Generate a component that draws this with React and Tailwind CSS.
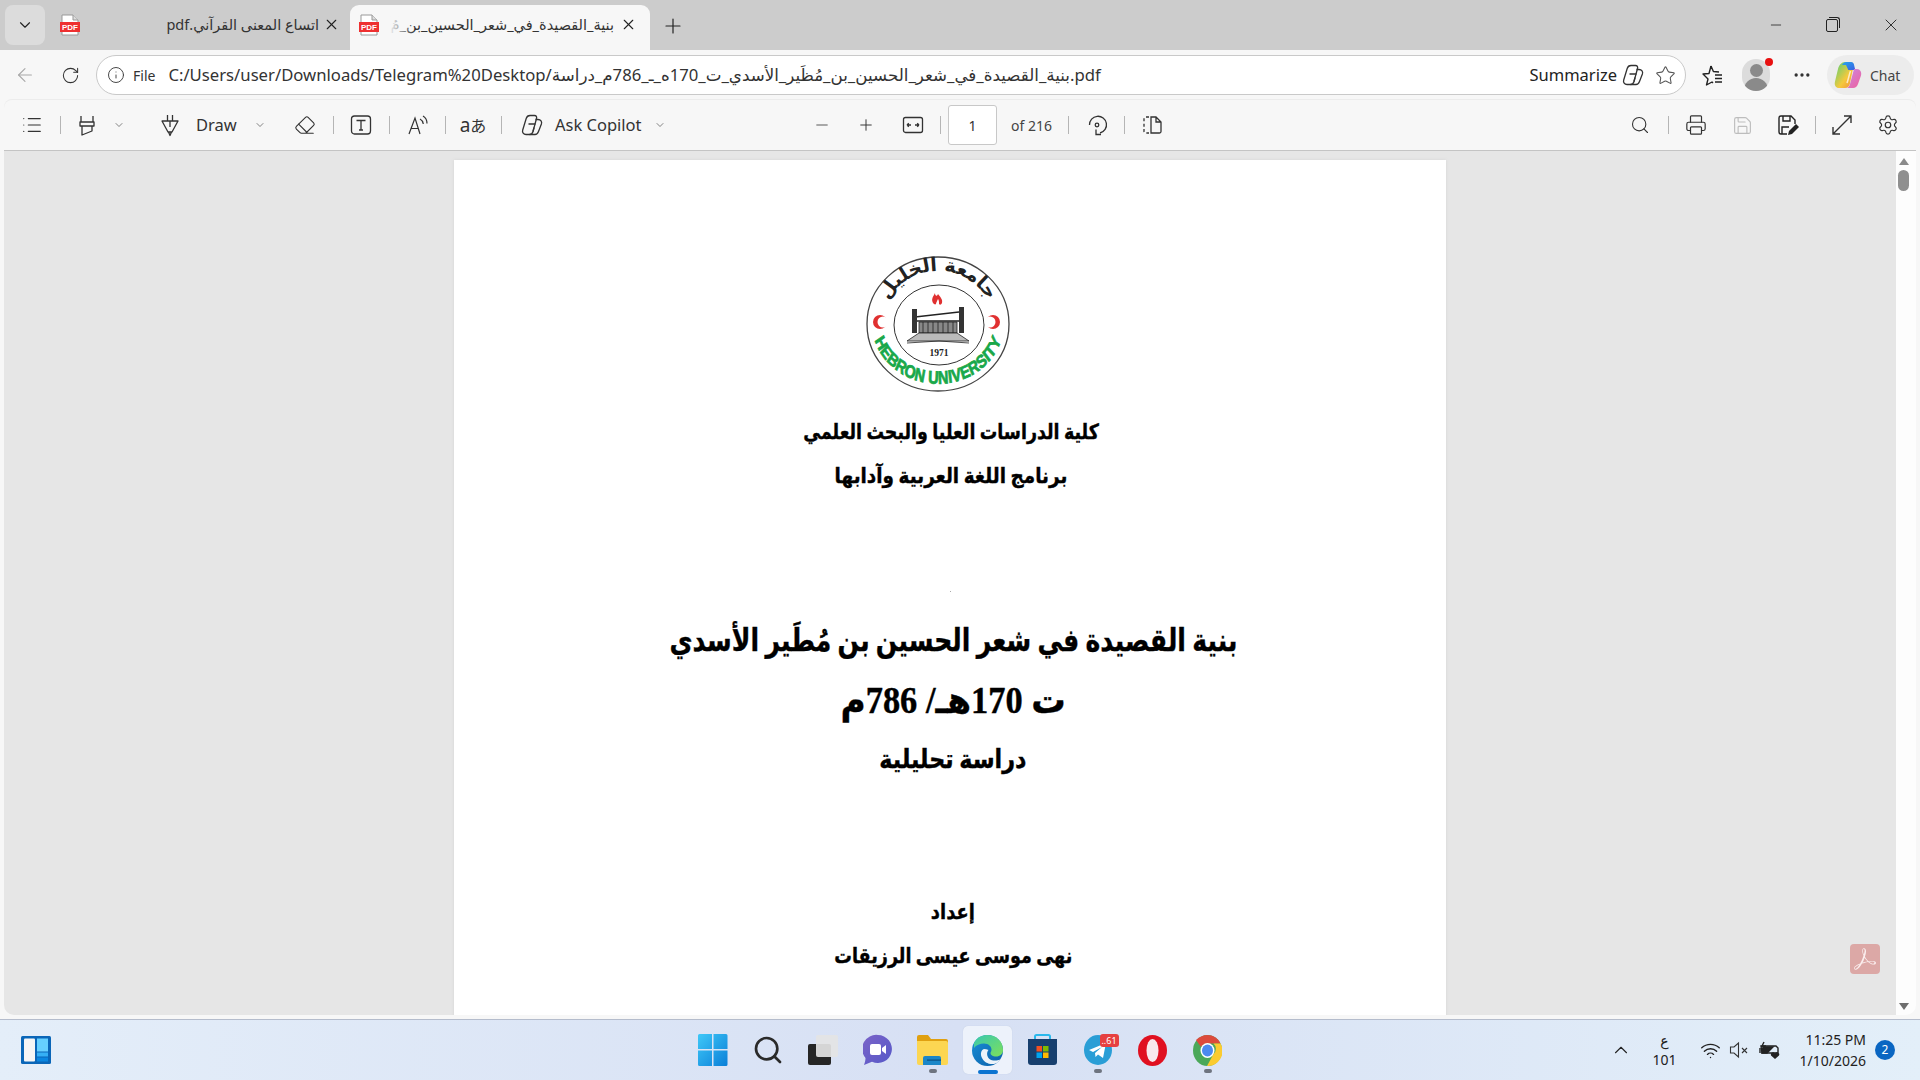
import React from 'react';
import { ChevronDown, List, Minus, Plus, Search, Printer, Save, Settings, X, Star, ArrowLeft, RotateCw, Info, Ellipsis, Eraser, ChevronUp, Wifi } from 'lucide-react';
import { SiAdobeacrobatreader } from 'react-icons/si';

const ui = 'font-["Noto_Sans","DejaVu_Sans",sans-serif]';
const doc = 'font-["Liberation_Serif","DejaVu_Sans",serif]';

const URL_AR = 'بنية_القصيدة_في_شعر_الحسين_بن_مُظَير_الأسدي_ت_170ه_ـ_786م_دراسة.pdf';

const PdfIcon = () => (
  <svg width="20" height="22" viewBox="0 0 20 22">
    <path d="M2 1h11l5 5v15H2z" fill="#fff" stroke="#999" strokeWidth="1" />
    <path d="M13 1v5h5" fill="#ddd" stroke="#999" strokeWidth="1" />
    <rect x="0" y="8" width="20" height="10" fill="#ee3030" />
    <text x="10" y="16" textAnchor="middle" fontSize="8" fontWeight="700" fill="#fff" fontFamily="Liberation Sans">PDF</text>
  </svg>
);

const CopilotOutline = ({ size = 24 }) => (
  <svg width={size} height={size} viewBox="0 0 24 24" fill="none" stroke="#333" strokeWidth="1.3" strokeLinejoin="round">
    <path d="M10 2.500h4.500c1.800 0 2.500 1.200 2 3L13 18.500c-.5 1.800-1.800 3-3.500 3H6c-2.500 0-4-2-3.300-4.500L6.200 5.500C6.800 3.500 8.300 2.500 10 2.500z" />
    <path d="M15.500 6.500H18c2.800 0 4.200 2 3.400 4.500l-2.900 7.500c-.7 1.900-1.800 3-3.500 3H9.500" />
    <path d="M8.500 11h7M14 14.500l-1 4" />
  </svg>
);

const Highlighter = () => (
  <svg width="24" height="24" viewBox="0 0 24 24" fill="none" stroke="#333" strokeWidth="1.3" strokeLinejoin="round">
    <path d="M6 3v6h12V3M5 9h14v4H5zM7 13v9l10-4v-5" />
  </svg>
);

const DrawPen = () => (
  <svg width="24" height="24" viewBox="0 0 24 24" fill="none" stroke="#333" strokeWidth="1.3" strokeLinejoin="round">
    <path d="M9.500 2v6M14.500 2v6M4 8h16l-6 11h-4zM12 8v6M10.500 19l1.500 3.500 1.500-3.500" />
  </svg>
);

const TextBox = () => (
  <svg width="24" height="24" viewBox="0 0 24 24" fill="none" stroke="#333" strokeWidth="1.3">
    <rect x="2.500" y="3" width="19" height="18" rx="3" />
    <path d="M7.500 7.500h9M12 7.500v9.500M10 17h4" />
  </svg>
);

const ReadAloud = () => (
  <svg width="24" height="24" viewBox="0 0 24 24" fill="none" stroke="#333" strokeWidth="1.2">
    <path d="M3 21L9 5l5 16M5 15.500h7.500" />
    <path d="M14 6c2 1 3 3 3.300 5M17 3c2.500 1.500 4 4.500 4 7.500" />
  </svg>
);

const Translate = () => (
  <span className={`${ui} text-[19px] leading-none text-[#333] whitespace-nowrap`}>a<span className='font-["Noto_Sans_CJK_JP",sans-serif] text-[16px]'>あ</span></span>
);

const FitWidth = () => (
  <svg width="24" height="24" viewBox="0 0 24 24" fill="none" stroke="#333" strokeWidth="1.3">
    <rect x="2.500" y="4.500" width="19" height="15" rx="2" />
    <path d="M6 12h4M6 12l1.800-1.800M6 12l1.800 1.800M18 12h-4M18 12l-1.800-1.800M18 12l-1.800 1.800" />
  </svg>
);

const Rotate = () => (
  <svg width="24" height="24" viewBox="0 0 24 24" fill="none" stroke="#333" strokeWidth="1.3">
    <path d="M4.500 12A8.500 8.500 0 1 1 15 20" />
    <circle cx="12" cy="12" r="1.800" />
    <path d="M11 16.500V21.500h5" />
  </svg>
);

const TwoPages = () => (
  <svg width="24" height="24" viewBox="0 0 24 24" fill="none" stroke="#333" strokeWidth="1.3">
    <path d="M9 4H5.500A1.500 1.500 0 0 0 4 5.500v13A1.500 1.500 0 0 0 5.500 20H9" strokeDasharray="3 2.400" />
    <path d="M11 4h5l5 5v9.500a1.500 1.500 0 0 1-1.500 1.500H11zM16 4v5h5" />
  </svg>
);

const SaveAs = () => (
  <svg width="24" height="24" viewBox="0 0 24 24" fill="none" stroke="#222" strokeWidth="1.4">
    <path d="M12 21H6a2 2 0 0 1-2-2V5a2 2 0 0 1 2-2h10l4 4v4M8 3v5h7V3M7 21v-7h7" />
    <path d="M13 22l1-4 7-7 3 3-7 7z" fill="#222" stroke="none" />
  </svg>
);

const Expand = () => (
  <svg width="24" height="24" viewBox="0 0 24 24" fill="none" stroke="#333" strokeWidth="1.4">
    <path d="M14 3h7v7M21 3L3 21M3 14v7h7" />
  </svg>
);

const FavStar = () => (
  <svg width="24" height="24" viewBox="0 0 24 24" fill="none" stroke="#222" strokeWidth="1.4" strokeLinejoin="round">
    <path d="M11 3l2.400 5.500 5.600.5M13 20l-1-1-5.500 3 1.500-6L3 11l6-.5L11 3" />
    <path d="M15 12h7M15 15.500h7M15 19h7" />
  </svg>
);

const Avatar = () => (
  <div className="relative w-[28px] h-[32px] rounded-full bg-[#dcdcdc] overflow-hidden flex flex-col items-center">
    <div className="w-[13px] h-[14px] rounded-full bg-[#8a8a8a] mt-[5px]" />
    <div className="w-[24px] h-[14px] rounded-t-full bg-[#8a8a8a] mt-[1px]" />
  </div>
);

const CopilotColor = ({ size = 28 }) => (
  <svg width={size} height={size} viewBox="0 0 28 28">
    <defs>
      <linearGradient id="cp1" x1="0" y1="0" x2="1" y2="1"><stop offset="0" stopColor="#25a7f0" /><stop offset="1" stopColor="#3a5fe0" /></linearGradient>
      <linearGradient id="cp2" x1="0" y1="0" x2="1" y2="1"><stop offset="0" stopColor="#c78ae8" /><stop offset="1" stopColor="#f0609a" /></linearGradient>
      <linearGradient id="cp3" x1="0" y1="0" x2="1" y2="1"><stop offset="0" stopColor="#4fd078" /><stop offset="0.6" stopColor="#f5c93c" /><stop offset="1" stopColor="#f08a3a" /></linearGradient>
    </defs>
    <path d="M11 1h5c2 0 3.500 1.500 3.800 3l-4 19c-.4 2-2 4-4.800 4H5C2 27 0 24.500 1 20.500L4 8c1-4 3.500-7 7-7z" fill="url(#cp3)" />
    <path d="M8 4c1-2 2.500-3 4-3h5c2 0 3 1.500 3.300 4l1 4h-7L12 4z" fill="url(#cp1)" />
    <path d="M20 8h3c3 0 5 3 4 6.500l-3 8.500c-1 2.500-2.500 4-5 4h-7c2.500 0 3.500-2 4-4z" fill="url(#cp2)" />
    <path d="M13 22c1.500-4 2-8 3.500-12" stroke="#fff" strokeWidth="1.500" fill="none" opacity="0.7" />
  </svg>
);

const Sep = ({ className = '' }) => <div className={`w-px h-[18px] bg-[#b5b5b5] shrink-0 ${className}`} />;

const Slot = ({ className = '', children }) => (
  <div className={`h-[24px] flex items-center justify-center shrink-0 ${className}`}>{children}</div>
);

const Chev = ({ className = '' }) => (
  <Slot className={`w-[12px] ${className}`}><ChevronDown size={14} strokeWidth={1.3} color="#444" /></Slot>
);

const Logo = () => (
  <svg width="146" height="138" viewBox="0 0 146 138" className="overflow-visible">
    <defs>
      <path id="hebronArc" d="M-80 82 A82 60 0 0 0 80 82" />
      <path id="arabicArc" d="M19 58 A55 52 0 0 1 127 58" />
    </defs>
    <ellipse cx="73" cy="69" rx="71" ry="67" fill="#fff" stroke="#444" strokeWidth="1.3" />
    <ellipse cx="74" cy="70" rx="45" ry="40" fill="#fff" stroke="#333" strokeWidth="1" />
    <text fontSize="19" fontWeight="700" fill="#222" fontFamily="DejaVu Sans" direction="rtl">
      <textPath href="#arabicArc" startOffset="50%" textAnchor="middle">جامعة الخليل</textPath>
    </text>
    <g transform="translate(73 0) scale(0.8 1)">
      <text fontSize="18" fontWeight="700" fill="#18a84a" stroke="#18a84a" strokeWidth="0.8" fontFamily="Liberation Sans" direction="ltr">
        <textPath href="#hebronArc" startOffset="50%" textAnchor="middle">HEBRON UNIVERSITY</textPath>
      </text>
    </g>
    <circle cx="15" cy="67" r="7" fill="#e03030" />
    <circle cx="18" cy="67" r="5.500" fill="#fff" />
    <circle cx="128" cy="67" r="7" fill="#e03030" />
    <circle cx="125" cy="67" r="5.500" fill="#fff" />
    <path d="M68 48c-2-4 0-6 2-10 0 3 2 4 3 1 2 3 5 5 4 9-1 2-2 2-3 1 0-2 0-4-1-5-1 2-2 4-2 5-1 1-2 0-3-1z" fill="#e03030" />
    <g stroke="#222" strokeWidth="0.8" fill="none">
      <path d="M50 62l44-5M50 66h46M50 62v16M96 58v20" strokeWidth="1.400" />
      <path d="M54 67h38v11H54z" fill="#888" />
      <path d="M58 67v11M63 67v11M68 67v11M73 67v11M78 67v11M83 67v11M88 67v11" />
      <path d="M42 86l12-8h38l12 8H74z" fill="#bbb" />
      <path d="M42 88l32-2 30 2" />
    </g>
    <rect x="47" y="54" width="5" height="24" fill="#333" />
    <rect x="94" y="52" width="5" height="26" fill="#333" />
    <text x="74" y="101" textAnchor="middle" fontSize="9.500" fontWeight="700" fill="#222" stroke="none" fontFamily="Liberation Serif">1971</text>
  </svg>
);

const TaskSlot = ({ active, dot, children }) => (
  <div className={`relative h-[48px] flex items-center justify-center ${active ? 'w-[49px] bg-[#edf2fb] rounded-[5px] shadow-[0_0_1px_#b8c4da] mx-[3px]' : 'w-[55px]'}`}>
    {children}
    {dot && <div className="absolute bottom-[1px] left-1/2 -translate-x-1/2 w-[8px] h-[4px] rounded-full bg-[#6e7480]" />}
    {active && <div className="absolute bottom-[0px] left-1/2 -translate-x-1/2 w-[20px] h-[4px] rounded-full bg-[#0b74d1]" />}
  </div>
);

const WinLogo = () => (
  <svg width="30" height="32" viewBox="0 0 30 32">
    <defs><linearGradient id="win" x1="0" y1="0" x2="1" y2="1"><stop offset="0" stopColor="#3fc8f8" /><stop offset="1" stopColor="#0a7fd8" /></linearGradient></defs>
    <path d="M0 1.500A1.500 1.500 0 0 1 1.500 0H14v15H0zM15.500 0H28a1.500 1.500 0 0 1 1.500 1.500V15h-14zM0 16.500h14V32H1.500A1.500 1.500 0 0 1 0 30.500zM15.500 16.500h14V30.500a1.500 1.500 0 0 1-1.500 1.500H15.500z" fill="url(#win)" />
  </svg>
);

const TaskView = () => (
  <svg width="30" height="30" viewBox="0 0 30 30">
    <rect x="0" y="9" width="23" height="21" rx="2" fill="#262626" />
    <rect x="8" y="0" width="22" height="22" rx="2" fill="#e4e4e4" opacity="0.92" />
  </svg>
);

const Meet = () => (
  <svg width="30" height="32" viewBox="0 0 30 32">
    <defs><linearGradient id="meet" x1="0" y1="0" x2="1" y2="1"><stop offset="0" stopColor="#7b63c8" /><stop offset="1" stopColor="#5659c8" /></linearGradient></defs>
    <path d="M15 1a14 14 0 1 1-6 26.700L1 31c1-3 1.500-5 1.500-7A14 14 0 0 1 15 1z" fill="url(#meet)" />
    <rect x="7" y="10" width="11" height="11" rx="2" fill="#fff" />
    <path d="M19 14l4-3v9l-4-3z" fill="#fff" />
  </svg>
);

const Folder = () => (
  <svg width="31" height="30" viewBox="0 0 31 30">
    <path d="M0 2a2 2 0 0 1 2-2h9l3 4h15a2 2 0 0 1 2 2v3H0z" fill="#e0a010" />
    <path d="M0 6h29a2 2 0 0 1 2 2v20a2 2 0 0 1-2 2H2a2 2 0 0 1-2-2z" fill="#fcd652" />
    <path d="M5 23a2 2 0 0 1 2-2h14a2 2 0 0 1 2 2v7H5z" fill="#1b86c8" transform="translate(1)" />
    <rect x="10" y="24.500" width="14" height="1.200" fill="#0a4f80" />
  </svg>
);

const Edge = () => (
  <svg width="31" height="31" viewBox="0 0 31 31">
    <defs>
      <linearGradient id="edge1" x1="0" y1="0" x2="1" y2="1"><stop offset="0" stopColor="#39c8b0" /><stop offset="1" stopColor="#7de05a" /></linearGradient>
      <linearGradient id="edge2" x1="0" y1="0" x2="1" y2="1"><stop offset="0" stopColor="#1a90d8" /><stop offset="1" stopColor="#0c5fa8" /></linearGradient>
    </defs>
    <circle cx="15.500" cy="15.500" r="15.500" fill="url(#edge2)" />
    <path d="M2 8C5 2 10 0 15.500 0 24 0 31 6 31 15c0 4-3 6.500-7 6.500-3 0-5.500-1.500-5.500-3.500 0-1 1-1.500 1-3.500 0-3-3-6-7.500-6C8 8.500 4 10 2 13z" fill="url(#edge1)" />
    <path d="M12 14c-3 1-4 5-2 9 2 4 6 6.500 12 6 3-.8 5-2.500 6-4.500-3 1.500-8 1.500-10.500-.5-3-2.500-3-7-1-9-1.500-.8-3-1-4.500-1z" fill="#fff" opacity="0.92" />
  </svg>
);

const Store = () => (
  <svg width="29" height="32" viewBox="0 0 29 32">
    <path d="M7 5V2.500A1.500 1.500 0 0 1 8.500 1h12A1.500 1.500 0 0 1 22 2.500V5" fill="none" stroke="#2bb8ec" strokeWidth="2" />
    <path d="M0 5h29v23a3 3 0 0 1-3 3H3a3 3 0 0 1-3-3z" fill="#173f6e" />
    <rect x="8.500" y="12" width="5.500" height="5.500" fill="#f25022" />
    <rect x="15" y="12" width="5.500" height="5.500" fill="#7fba00" />
    <rect x="8.500" y="18.500" width="5.500" height="5.500" fill="#00a4ef" />
    <rect x="15" y="18.500" width="5.500" height="5.500" fill="#ffb900" />
  </svg>
);

const Telegram = () => (
  <div className="relative w-[28px] h-[30px]">
    <svg width="28" height="30" viewBox="0 0 28 30">
      <ellipse cx="14" cy="15" rx="14" ry="15" fill="#2a9ed6" />
      <path d="M5 15l17-7-3 15-5-3.500-2.500 2.500-.5-4 7-6-9 5z" fill="#fff" />
    </svg>
    <div className={`${ui} absolute -top-[1px] left-[16px] w-[19px] h-[13px] rounded-[3px] bg-[#e64040] text-white text-[9px] leading-[13px] text-center`}>..61</div>
  </div>
);

const Opera = () => (
  <svg width="29" height="31" viewBox="0 0 29 31">
    <ellipse cx="14.500" cy="15.500" rx="14.500" ry="15.500" fill="#e01020" />
    <ellipse cx="14.500" cy="15.500" rx="6" ry="11.500" fill="#f8e8ec" />
  </svg>
);

const Chrome = () => (
  <svg width="29" height="31" viewBox="0 0 29 31">
    <ellipse cx="14.500" cy="15.500" rx="14.500" ry="15.500" fill="#4aa859" />
    <path d="M14.500 0C20 0 25 3 27.500 8.500H14.500A7 7 0 0 0 8 12L3 5C6 2 10 0 14.500 0z" fill="#dc4a3c" />
    <path d="M27.500 8.500A15 15 0 0 1 14 31l6.500-12a7 7 0 0 0 0-10.500z" fill="#fbcb30" />
    <ellipse cx="14.500" cy="15.500" rx="7" ry="7.500" fill="#fff" />
    <ellipse cx="14.500" cy="15.500" rx="5.500" ry="6" fill="#4b8af0" />
  </svg>
);

const Widgets = () => (
  <svg width="30" height="28" viewBox="0 0 30 28">
    <rect x="0" y="0" width="30" height="28" rx="1.500" fill="#0a66b8" />
    <rect x="3" y="2.500" width="11" height="23" rx="1" fill="#f5f5f5" />
    <rect x="16" y="2.500" width="11" height="13" fill="#66d0ff" />
    <rect x="16" y="16.500" width="11" height="4" fill="#35b0f5" />
    <rect x="16" y="21.500" width="11" height="4" fill="#0a86e0" />
  </svg>
);

const Battery = () => (
  <svg width="22" height="20" viewBox="0 0 22 20" fill="none" stroke="#222" strokeWidth="1.400">
    <path d="M2 6h15l2 2v5H3z" />
    <path d="M1 13V8M5 2L3 6h3L4 10" />
    <path d="M4 7h10L8 13H3z" fill="#222" />
    <path d="M16 19l-4-3.500a2.200 2.200 0 0 1 4-2 2.200 2.200 0 0 1 4 2z" fill="#222" stroke="none" />
  </svg>
);

const Muted = () => (
  <svg width="20" height="20" viewBox="0 0 20 20" fill="none" stroke="#333" strokeWidth="1.100">
    <path d="M1.500 7v6h3.500l4.500 4V3L5 7zM13 8l5 5M18 8l-5 5" />
  </svg>
);

export default function App() {
  return (
    <div className={`w-[1920px] h-[1080px] flex flex-col overflow-hidden bg-[#f7f7f7] ${ui}`}>
      {/* tab strip */}
      <div className="h-[50px] bg-[#cccccc] flex items-end shrink-0 relative">
        <div className="w-[40px] h-[40px] ml-[5px] mb-[5px] rounded-[8px] bg-[#dcdcdc] flex items-center justify-center">
          <ChevronDown size={18} strokeWidth={1.5} color="#222" />
        </div>
        <div className="w-[305px] h-[45px] flex items-center pb-[6px]">
          <div className="ml-[15px]"><PdfIcon /></div>
          <div dir="rtl" className="flex-1 text-[14.500px] text-[#333] whitespace-nowrap pr-[4px]">اتساع المعنى القرآني.pdf</div>
          <X size={17} strokeWidth={1.6} color="#222" className="mr-[10px]" />
        </div>
        <div className="w-[300px] h-[45px] bg-[#f7f7f7] rounded-t-[9px] flex items-center pb-[6px]">
          <div className="ml-[9px] shrink-0"><PdfIcon /></div>
          <div className="relative flex-1 min-w-0 ml-[10px] overflow-hidden">
            <div dir="rtl" className="text-[14.500px] text-[#333] whitespace-nowrap pr-[2px]">بنية_القصيدة_في_شعر_الحسين_بن_مُ</div>
            <div className="absolute left-0 top-0 bottom-0 w-[26px] bg-gradient-to-r from-[#f7f7f7] to-transparent" />
          </div>
          <X size={17} strokeWidth={1.6} color="#222" className="mr-[13px] ml-[4px] shrink-0" />
        </div>
        <div className="w-[46px] h-[45px] flex items-center justify-center pb-[4px]">
          <Plus size={24} strokeWidth={1.2} color="#222" />
        </div>
        <div className="ml-auto flex items-center h-[50px] pr-[19px]">
          <Minus size={16} strokeWidth={1.2} color="#222" className="mr-[42px]" />
          <div className="relative w-[12px] h-[13px] border border-[#222] rounded-[2px] mr-[43px]">
            <div className="absolute -top-[3px] left-[2px] w-[11px] h-[11px] border-t border-r border-[#222] rounded-tr-[3px]" />
          </div>
          <X size={20} strokeWidth={1.1} color="#222" />
        </div>
      </div>

      {/* address row */}
      <div className="h-[50px] flex items-center shrink-0">
        <Slot className="w-[24px] ml-[13px]"><ArrowLeft size={22} strokeWidth={1.2} color="#a8a8a8" /></Slot>
        <Slot className="w-[24px] ml-[21px]"><RotateCw size={19} strokeWidth={1.3} color="#333" /></Slot>
        <div className="ml-[14px] w-[1590px] h-[40px] rounded-full border border-[#c9c9c9] bg-white flex items-center">
          <Info size={18} strokeWidth={1.3} color="#444" className="ml-[10px]" />
          <span className="ml-[8px] text-[14px] text-[#333]">File</span>
          <span className="ml-[13px] text-[16.700px] text-[#333] whitespace-nowrap">C:/Users/user/Downloads/Telegram%20Desktop/{URL_AR}</span>
          <span className="ml-auto text-[16.500px] text-[#222]">Summarize</span>
          <div className="ml-[4px]"><CopilotOutline size={24} /></div>
          <Star size={21} strokeWidth={1.2} color="#555" className="ml-[10px] mr-[9px]" />
        </div>
        <Slot className="w-[24px] ml-[14px]"><FavStar /></Slot>
        <div className="ml-[18px] relative">
          <Avatar />
          <div className="absolute -top-[1px] -right-[3px] w-[8px] h-[8px] rounded-full bg-[#e81010]" />
        </div>
        <Slot className="w-[24px] ml-[20px]"><Ellipsis size={20} strokeWidth={2} color="#333" /></Slot>
        <div className="ml-[13px] w-[87px] h-[40px] rounded-full bg-[#ececec] flex items-center">
          <div className="ml-[7px]"><CopilotColor /></div>
          <span className="ml-[8px] text-[14px] text-[#444]">Chat</span>
        </div>
      </div>

      {/* pdf toolbar */}
      <div className="mx-[4px] h-[51px] rounded-t-[8px] border-b border-[#c4c4c4] shadow-[0_-1px_0_#ececec] flex items-center shrink-0">
        <Slot className="w-[56px]"><List size={22} strokeWidth={1.3} color="#333" /></Slot>
        <Sep />
        <Slot className="w-[52px]"><Highlighter /></Slot>
        <Chev />
        <Slot className="w-[24px] ml-[33px]"><DrawPen /></Slot>
        <span className="ml-[14px] w-[40px] text-[16.500px] text-[#333]">Draw</span>
        <Chev className="ml-[18px]" />
        <Slot className="w-[24px] ml-[27px]"><Eraser size={22} strokeWidth={1.2} color="#333" /></Slot>
        <Sep className="ml-[16px]" />
        <Slot className="w-[24px] ml-[15px]"><TextBox /></Slot>
        <Sep className="ml-[16px]" />
        <Slot className="w-[24px] ml-[16px]"><ReadAloud /></Slot>
        <Sep className="ml-[15px]" />
        <Slot className="w-[24px] ml-[15px]"><Translate /></Slot>
        <Sep className="ml-[16px]" />
        <Slot className="w-[24px] ml-[18px]"><CopilotOutline /></Slot>
        <span className="ml-[11px] w-[88px] text-[16.500px] text-[#333] whitespace-nowrap">Ask Copilot</span>
        <Chev className="ml-[11px]" />
        <Slot className="w-[24px] ml-[144px]"><Minus size={18} strokeWidth={1.3} color="#555" /></Slot>
        <Slot className="w-[24px] ml-[20px]"><Plus size={18} strokeWidth={1.3} color="#333" /></Slot>
        <Slot className="w-[24px] ml-[23px]"><FitWidth /></Slot>
        <Sep className="ml-[15px]" />
        <div className="ml-[7px] w-[49px] h-[40px] bg-white border border-[#c8c8c8] rounded-[3px] flex items-center justify-center text-[14px] text-[#333] shrink-0">1</div>
        <span className="ml-[14px] w-[42px] text-[14px] text-[#444] whitespace-nowrap">of 216</span>
        <Sep className="ml-[15px]" />
        <Slot className="w-[24px] ml-[16px]"><Rotate /></Slot>
        <Sep className="ml-[15px]" />
        <Slot className="w-[24px] ml-[15px]"><TwoPages /></Slot>
        <div className="ml-auto flex items-center pr-[16px]">
          <Slot className="w-[24px]"><Search size={20} strokeWidth={1.3} color="#333" /></Slot>
          <Sep className="ml-[16px]" />
          <Slot className="w-[24px] ml-[15px]"><Printer size={22} strokeWidth={1.3} color="#333" /></Slot>
          <Slot className="w-[24px] ml-[22px]"><Save size={21} strokeWidth={1.3} color="#bdbdbd" /></Slot>
          <Slot className="w-[24px] ml-[21px]"><SaveAs /></Slot>
          <Sep className="ml-[16px]" />
          <Slot className="w-[24px] ml-[14px]"><Expand /></Slot>
          <Slot className="w-[24px] ml-[22px]"><Settings size={22} strokeWidth={1.3} color="#333" /></Slot>
        </div>
      </div>

      {/* viewer */}
      <div className="mx-[4px] h-[864px] flex shrink-0 rounded-b-[10px] overflow-hidden">
        <div className="flex-1 bg-[#e6e6e6] pt-[9px] flex justify-center relative overflow-hidden">
          <div className={`w-[992px] h-[900px] bg-white shadow-[0_0_3px_#d4d4d4] flex flex-col items-center shrink-0 ${doc} text-black font-bold`} dir="rtl">
            <div className="mt-[95px] mr-[24px]"><Logo /></div>
            <div className="mt-[17px] text-[21px] leading-[44px] mr-[-2px] scale-x-[0.83] [-webkit-text-stroke:0.4px_black]">كلية الدراسات العليا والبحث العلمي</div>
            <div className="text-[21px] leading-[44px] mr-[-2px] scale-x-[0.875] [-webkit-text-stroke:0.4px_black]">برنامج اللغة العربية وآدابها</div>
            <div className="mt-[93px] w-[1px] h-[1px] bg-[#aaa]" />
            <div className="mt-[24px] text-[31px] leading-[50px] mr-[-6px] scale-x-[0.81] [-webkit-text-stroke:0.4px_black]">بنية القصيدة في شعر الحسين بن مُطَير الأسدي</div>
            <div className="mt-[10px] text-[37px] leading-[50px] mr-[-6px] scale-x-[0.93] [-webkit-text-stroke:0.4px_black]">ت 170هـ/ 786م</div>
            <div className="mt-[9px] text-[26px] leading-[50px] mr-[-6px] scale-x-[0.856] [-webkit-text-stroke:0.4px_black]">دراسة تحليلية</div>
            <div className="mt-[102px] text-[21px] leading-[50px] mr-[-6px] scale-x-[0.85] [-webkit-text-stroke:0.4px_black]">إعداد</div>
            <div className="mt-[-6px] text-[21px] leading-[50px] mr-[-6px] scale-x-[0.836] [-webkit-text-stroke:0.4px_black]">نهى موسى عيسى الرزيقات</div>
          </div>
          <div className="absolute right-[16px] bottom-[41px] w-[30px] h-[30px] rounded-[4px] bg-[#dca8a6] flex items-center justify-center">
            <SiAdobeacrobatreader size={22} color="#fbeeee" />
          </div>
        </div>
        <div className="w-[20px] bg-[#fdfdfd] flex flex-col items-center pt-[7px] pr-[5px] justify-between pb-[5px] relative">
          <div className="flex flex-col items-center">
            <div className="w-0 h-0 border-l-[5px] border-r-[5px] border-b-[7px] border-l-transparent border-r-transparent border-b-[#8a8a8a]" />
            <div className="w-[11px] h-[21px] rounded-full bg-[#8f8f8f] mt-[5px]" />
          </div>
          <div className="w-0 h-0 border-l-[5px] border-r-[5px] border-t-[7px] border-l-transparent border-r-transparent border-t-[#6e6e6e]" />
        </div>
      </div>

      <div className="h-[4px] shrink-0" />

      {/* taskbar */}
      <div className="h-[61px] border-t border-[#b4bccc] bg-gradient-to-r from-[#e4eef9] via-[#d7e0f4] to-[#e3eff9] grid grid-cols-[1fr_auto_1fr] items-center shrink-0">
        <div className="pl-[21px]"><Widgets /></div>
        <div className="flex items-center">
          <TaskSlot><WinLogo /></TaskSlot>
          <TaskSlot><Search size={32} strokeWidth={2} color="#2a2a2a" /></TaskSlot>
          <TaskSlot><TaskView /></TaskSlot>
          <TaskSlot><Meet /></TaskSlot>
          <TaskSlot dot><Folder /></TaskSlot>
          <TaskSlot active><Edge /></TaskSlot>
          <TaskSlot><Store /></TaskSlot>
          <TaskSlot dot><Telegram /></TaskSlot>
          <TaskSlot><Opera /></TaskSlot>
          <TaskSlot dot><Chrome /></TaskSlot>
        </div>
        <div className="flex items-center justify-end pr-[25px] text-[#222]">
          <ChevronUp size={22} strokeWidth={1.2} />
          <div className="ml-[20px] flex flex-col items-center text-[14px] leading-[19px]">
            <span>ع</span>
            <span>101</span>
          </div>
          <Wifi size={21} strokeWidth={1.6} className="ml-[23px]" />
          <div className="ml-[8px]"><Muted /></div>
          <div className="ml-[10px]"><Battery /></div>
          <div className="ml-[19px] flex flex-col items-end text-[14px] leading-[21px]">
            <span>11:25 PM</span>
            <span>1/10/2026</span>
          </div>
          <div className="ml-[9px] w-[20px] h-[20px] rounded-full bg-[#0a66c2] text-white text-[12px] flex items-center justify-center">2</div>
        </div>
      </div>
    </div>
  );
}
